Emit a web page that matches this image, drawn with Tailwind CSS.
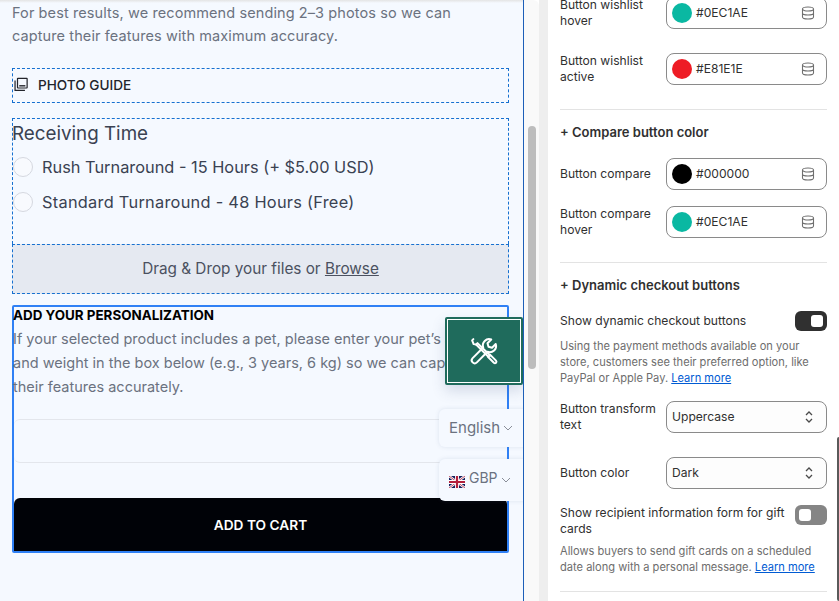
<!DOCTYPE html>
<html lang="en">
<head>
  <meta charset="UTF-8" />
  <title>Theme settings</title>
  <script src="https://cdn.jsdelivr.net/npm/@tailwindcss/browser@4"></script>
</head>
<body class="bg-white font-['Inter',sans-serif]">
  <div class="flex w-[839px] h-[601px] overflow-hidden">

    <!-- preview -->
    <div class="relative w-[524px] h-[601px] shrink-0 overflow-hidden bg-[#f5f9ff] border-r border-r-[#1d5fb8] pt-[1px] font-['Inter',sans-serif]">
      <div class="absolute top-0 left-0 right-0 h-[3px] bg-gradient-to-b from-[#e4e4e4] to-transparent"></div>

      <p class="mx-3 text-[14.5px] leading-[23px] tracking-[0.1px] text-[#6b7280]">For best results, we recommend sending 2–3 photos so we can<br>capture their features with maximum accuracy.</p>

      <div class="mx-3 mt-[21px] w-[497px] h-[35px] flex items-center border border-dashed border-[#1670d0] text-[#22242b]">
        <svg class="ml-[1px] w-[14px] h-[15px] mb-[2px]" viewBox="0 0 16 16" fill="none" stroke="currentColor" stroke-width="1.4"><path d="M1.2 3.5v11.3h11.3"/><rect x="4" y="1" width="11" height="11" rx="0.5"/><path d="M6 9.5h7" stroke-width="1.6"/></svg>
        <span class="ml-[10px] text-[13.600px] font-medium">PHOTO GUIDE</span>
      </div>

      <div class="mx-3 mt-[15px] w-[497px] h-[126px] border border-dashed border-[#1670d0] border-b-0 text-[#3a4252]">
        <div class="text-[18.800px] leading-[26px] mt-[2px] -ml-[1px]">Receiving Time</div>
        <div class="flex items-center h-[20px] mt-[10px] text-[16.350px]">
          <span class="w-[20px] h-[20px] rounded-full border border-[#d5d8e0] bg-[#f8fafe] shrink-0"></span>
          <span class="ml-[9px]">Rush Turnaround - 15 Hours (+ $5.00 USD)</span>
        </div>
        <div class="flex items-center h-[20px] mt-[15px] text-[16.350px]">
          <span class="w-[20px] h-[20px] rounded-full border border-[#d5d8e0] bg-[#f8fafe] shrink-0"></span>
          <span class="ml-[9px] tracking-[0.27px]">Standard Turnaround - 48 Hours (Free)</span>
        </div>
      </div>

      <div class="mx-3 w-[497px] h-[50px] flex items-center justify-center pt-[1px] border border-dashed border-[#1670d0] bg-[#e5e9f1] text-[15.300px] text-[#4b5160]">
        <span>Drag &amp; Drop your files or <u>Browse</u></span>
      </div>

      <div class="mx-3 mt-[11px] w-[497px] h-[248px] border-2 border-[#2f80f5] rounded-[2px]">
        <div class="text-[13.400px] leading-[20px] mt-[-2px] -ml-[1px] font-bold text-black">ADD YOUR PERSONALIZATION</div>
        <p class="mt-[2px] -ml-[1px] whitespace-nowrap text-[14.5px] leading-[24px] text-[#6b7280]">If your selected product includes a pet, please enter your pet’s age<br>and weight in the box below (e.g., 3 years, 6 kg) so we can capture<br>their features accurately.</p>
        <div class="mt-[20px] h-[44px] border-t border-b border-[#e3e6ec] rounded-[6px]"></div>
        <div class="mt-[35px] h-[53px] flex items-center justify-center pt-[2px] bg-[#000207] rounded-t-[6px] text-white text-[13.700px] font-semibold">ADD TO CART</div>
      </div>

      <!-- floating tool button -->
      <div class="absolute left-[445px] top-[317px] w-[78px] h-[68px] flex items-center justify-center bg-[#1f6b5c] rounded-[2px] border-2 border-[#1f6b5c] outline outline-1 -outline-offset-3 outline-white shadow-[0_6px_14px_rgba(60,80,120,0.18)]">
        <svg class="w-[30px] h-[30px]" viewBox="0 0 24 24" fill="none" stroke="white" stroke-width="1.6" stroke-linecap="round" stroke-linejoin="round">
          <path d="M3.5 2.5 2.5 3.5l1.2 3 2 .3 9.8 9.8"/>
          <path d="M5.7 6.8 6.8 5.7 17 15.6"/>
          <path d="M15.3 16.8 17 15.1l4.6 4.6a1.3 1.3 0 0 1 0 1.7 1.3 1.3 0 0 1-1.7 0z"/>
          <path d="M21.4 6.4 18.4 9.4 15.6 8.6 14.8 5.8 17.8 2.8a5 5 0 0 0-6.4 6.4L2.9 17.7a2.3 2.3 0 0 0 3.4 3.4l8.500-8.500a5 5 0 0 0 6.600-6.200z"/>
        </svg>
      </div>

      <!-- language + currency -->
      <div class="absolute left-[439px] top-[409px] w-[90px] h-[38px] flex items-center pl-[10px] bg-[#f5f9ff] rounded-[6px] shadow-[0_0_4px_rgba(90,110,150,0.16)] text-[15px] text-[#6b7280]">
        <span>English</span>
        <svg class="ml-[3px] w-[10px] h-[10px]" viewBox="0 0 10 10" fill="none" stroke="#8a8f99" stroke-width="1"><path d="M1 3l4 4 4-4"/></svg>
      </div>
      <div class="absolute left-[439px] top-[459px] w-[90px] h-[42px] flex items-center pl-[10px] bg-[#f5f9ff] rounded-[6px] shadow-[0_0_4px_rgba(90,110,150,0.16)] text-[14px] text-[#6b7280]">
        <svg class="w-[16px] h-[12px] mt-[4px]" viewBox="0 0 16 12">
          <rect width="16" height="12" fill="#14215e"/>
          <path d="M0 0l16 12M16 0L0 12" stroke="#fff" stroke-width="2.400"/>
          <path d="M0 0l16 12M16 0L0 12" stroke="#b3203c" stroke-width="0.800"/>
          <path d="M8 0v12M0 6h16" stroke="#fff" stroke-width="4"/>
          <path d="M8 0v12M0 6h16" stroke="#b3203c" stroke-width="2.200"/>
        </svg>
        <span class="ml-[4px] -mt-[6px]">GBP</span>
        <svg class="ml-[3px] w-[10px] h-[10px]" viewBox="0 0 10 10" fill="none" stroke="#8a8f99" stroke-width="1"><path d="M1 3l4 4 4-4"/></svg>
      </div>
    </div>

    <!-- preview scrollbar -->
    <div class="relative w-[15px] h-[601px] shrink-0 bg-[#f9f9f9] rounded-tr-[6px]">
      <div class="absolute left-[4px] top-[126px] w-[8px] h-[243px] rounded-[4px] bg-[#bdbdbd]"></div>
    </div>
    <div class="w-[9px] h-[601px] shrink-0 bg-[#eeeeee]"></div>

    <!-- settings -->
    <div class="relative flex-1 h-[601px] overflow-hidden bg-white text-[12.100px] leading-[16px] text-[#303030]">
      <div class="pl-[12px] pr-[12px]">

        <div class="-mt-[3px] flex items-center h-[32px]">
          <div class="w-[106px]">Button wishlist<br>hover</div>
          <div class="flex-1 h-[32px] flex items-center pl-[5px] pr-[11px] border border-[#8a8a8a] rounded-[8px]">
            <span class="w-[20px] h-[20px] rounded-full bg-[#0ab8a2]"></span>
            <span class="ml-[4px] flex-1">#0EC1AE</span>
            <svg class="w-[14px] h-[14px]" viewBox="0 0 14 14" fill="none" stroke="#6f6f6f" stroke-width="1.100"><ellipse cx="7" cy="3" rx="5.500" ry="2"/><path d="M1.500 3v8c0 1.100 2.500 2 5.500 2s5.500-.9 5.500-2V3M1.500 7c0 1.100 2.500 2 5.500 2s5.500-.9 5.500-2"/></svg>
          </div>
        </div>

        <div class="mt-[24px] flex items-center h-[32px]">
          <div class="w-[106px]">Button wishlist<br>active</div>
          <div class="flex-1 h-[32px] flex items-center pl-[5px] pr-[11px] border border-[#8a8a8a] rounded-[8px]">
            <span class="w-[20px] h-[20px] rounded-full bg-[#ee1c25]"></span>
            <span class="ml-[4px] flex-1">#E81E1E</span>
            <svg class="w-[14px] h-[14px]" viewBox="0 0 14 14" fill="none" stroke="#6f6f6f" stroke-width="1.100"><ellipse cx="7" cy="3" rx="5.500" ry="2"/><path d="M1.500 3v8c0 1.100 2.500 2 5.500 2s5.500-.9 5.500-2V3M1.500 7c0 1.100 2.500 2 5.500 2s5.500-.9 5.500-2"/></svg>
          </div>
        </div>

        <div class="mt-[24px] border-t border-[#e3e3e3]"></div>
        <div class="mt-[14px] h-[16px] text-[13px] font-semibold">+ Compare button color</div>

        <div class="mt-[18px] flex items-center h-[32px]">
          <div class="w-[106px]">Button compare</div>
          <div class="flex-1 h-[32px] flex items-center pl-[5px] pr-[11px] border border-[#8a8a8a] rounded-[8px]">
            <span class="w-[20px] h-[20px] rounded-full bg-black"></span>
            <span class="ml-[4px] flex-1">#000000</span>
            <svg class="w-[14px] h-[14px]" viewBox="0 0 14 14" fill="none" stroke="#6f6f6f" stroke-width="1.100"><ellipse cx="7" cy="3" rx="5.500" ry="2"/><path d="M1.500 3v8c0 1.100 2.500 2 5.500 2s5.500-.9 5.500-2V3M1.500 7c0 1.100 2.500 2 5.500 2s5.500-.9 5.500-2"/></svg>
          </div>
        </div>

        <div class="mt-[16px] flex items-center h-[32px]">
          <div class="w-[106px]">Button compare<br>hover</div>
          <div class="flex-1 h-[32px] flex items-center pl-[5px] pr-[11px] border border-[#8a8a8a] rounded-[8px]">
            <span class="w-[20px] h-[20px] rounded-full bg-[#0ab8a2]"></span>
            <span class="ml-[4px] flex-1">#0EC1AE</span>
            <svg class="w-[14px] h-[14px]" viewBox="0 0 14 14" fill="none" stroke="#6f6f6f" stroke-width="1.100"><ellipse cx="7" cy="3" rx="5.500" ry="2"/><path d="M1.500 3v8c0 1.100 2.500 2 5.500 2s5.500-.9 5.500-2V3M1.500 7c0 1.100 2.500 2 5.500 2s5.500-.9 5.500-2"/></svg>
          </div>
        </div>

        <div class="mt-[24px] border-t border-[#e3e3e3]"></div>
        <div class="mt-[14px] h-[16px] text-[13px] font-semibold">+ Dynamic checkout buttons</div>

        <div class="mt-[18px] flex items-center justify-between h-[20px]">
          <span>Show dynamic checkout buttons</span>
          <span class="w-[32px] h-[20px] flex items-center justify-end pr-[4px] rounded-[6px] bg-[#303030]"><span class="w-[12px] h-[12px] rounded-[3px] bg-white"></span></span>
        </div>
        <p class="mt-[7px] text-[11.100px] text-[#6d6d6d]">Using the payment methods available on your<br>store, customers see their preferred option, like<br>PayPal or Apple Pay. <a class="text-[#005bd3] underline">Learn more</a></p>

        <div class="mt-[15px] flex items-center h-[32px]">
          <div class="w-[106px]">Button transform<br>text</div>
          <div class="flex-1 h-[32px] flex items-center justify-between pl-[5px] pr-[12px] border border-[#8a8a8a] rounded-[8px] bg-[#fdfdfd]">
            <span>Uppercase</span>
            <svg class="w-[10px] h-[14px]" viewBox="0 0 10 14" fill="none" stroke="#4a4a4a" stroke-width="1.300"><path d="M2 5l3-3 3 3M2 9l3 3 3-3"/></svg>
          </div>
        </div>

        <div class="mt-[24px] flex items-center h-[32px]">
          <div class="w-[106px]">Button color</div>
          <div class="flex-1 h-[32px] flex items-center justify-between pl-[5px] pr-[12px] border border-[#8a8a8a] rounded-[8px] bg-[#fdfdfd]">
            <span>Dark</span>
            <svg class="w-[10px] h-[14px]" viewBox="0 0 10 14" fill="none" stroke="#4a4a4a" stroke-width="1.300"><path d="M2 5l3-3 3 3M2 9l3 3 3-3"/></svg>
          </div>
        </div>

        <div class="mt-[16px] flex justify-between">
          <span class="w-[228px]">Show recipient information form for gift cards</span>
          <span class="w-[32px] h-[20px] flex items-center pl-[4px] rounded-[6px] bg-[#858585]"><span class="w-[12px] h-[12px] rounded-[3px] bg-white"></span></span>
        </div>
        <p class="mt-[6px] text-[11.100px] text-[#6d6d6d]">Allows buyers to send gift cards on a scheduled<br>date along with a personal message. <a class="text-[#005bd3] underline">Learn more</a></p>

        <div class="mt-[16px] border-t border-[#e3e3e3]"></div>
      </div>
      <div class="absolute right-0 top-[437px] w-[2px] h-[164px] rounded-l-[2px] bg-[#5a5a5a]"></div>
    </div>
  </div>
</body>
</html>
